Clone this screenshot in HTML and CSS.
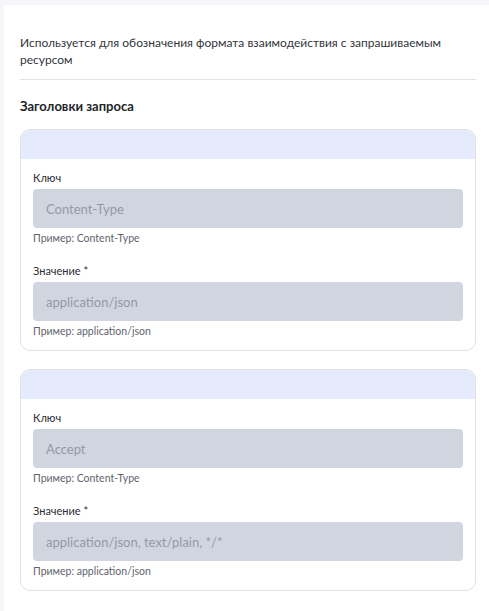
FILE: index.html
```html
<!DOCTYPE html>
<html lang="ru">
<head>
<meta charset="utf-8">
<link rel="stylesheet" href="styles.css">
</head>
<body>
<div class="panel">
  <p class="desc">Используется для обозначения формата взаимодействия с запрашиваемым ресурсом</p>
  <hr class="divider">
  <h2 class="heading">Заголовки запроса</h2>
  <div class="card">
    <div class="card-head"></div>
    <div class="card-body">
      <div class="field">
        <label class="label">Ключ</label>
        <div class="input">Content-Type</div>
        <div class="hint">Пример: Content-Type</div>
      </div>
      <div class="field">
        <label class="label">Значение *</label>
        <div class="input">application/json</div>
        <div class="hint">Пример: application/json</div>
      </div>
    </div>
  </div>
  <div class="card">
    <div class="card-head"></div>
    <div class="card-body">
      <div class="field">
        <label class="label">Ключ</label>
        <div class="input">Accept</div>
        <div class="hint">Пример: Content-Type</div>
      </div>
      <div class="field">
        <label class="label">Значение *</label>
        <div class="input">application/json, text/plain, */*</div>
        <div class="hint">Пример: application/json</div>
      </div>
    </div>
  </div>
</div>
</body>
</html>
```

FILE: styles.css
```css
html, body {
  margin: 0;
  padding: 0;
}
body {
  background: #f5f6fa;
  padding: 5px 0 0 4px;
  font-family: Lato, "Noto Sans", sans-serif;
  color: #2b2d33;
  min-height: 611px;
  box-sizing: border-box;
}
.panel {
  background: #ffffff;
  padding: 29px 13px 20px 16px;
  min-height: 560px;
}
.desc {
  margin: 0;
  font-size: 12px;
  line-height: 17px;
  color: #33353b;
}
.divider {
  border: 0;
  border-top: 1px solid #e1e2e6;
  margin: 11px 0 0 0;
}
.heading {
  margin: 17px 0 0 0;
  font-size: 13px;
  line-height: 18px;
  font-weight: 700;
  color: #22242a;
}
.card {
  margin-top: 14px;
  border: 1px solid #e0e2e8;
  border-radius: 10px;
  overflow: hidden;
}
.card + .card {
  margin-top: 18px;
}
.card-head {
  height: 29px;
  background: #e5eafc;
}
.card-body {
  padding: 11px 12px 12px 12px;
  display: flex;
  flex-direction: column;
  gap: 18px;
}
.field {
  display: flex;
  flex-direction: column;
}
.label {
  font-size: 11px;
  line-height: 16px;
  color: #2b2d33;
  margin-bottom: 3px;
}
.input {
  height: 39px;
  background: #d1d5e0;
  border-radius: 4px;
  padding: 0 13px;
  display: flex;
  align-items: center;
  font-size: 13px;
  color: #9499a5;
}
.hint {
  margin-top: 3px;
  font-size: 10.5px;
  line-height: 14px;
  color: #5f636d;
}
```
